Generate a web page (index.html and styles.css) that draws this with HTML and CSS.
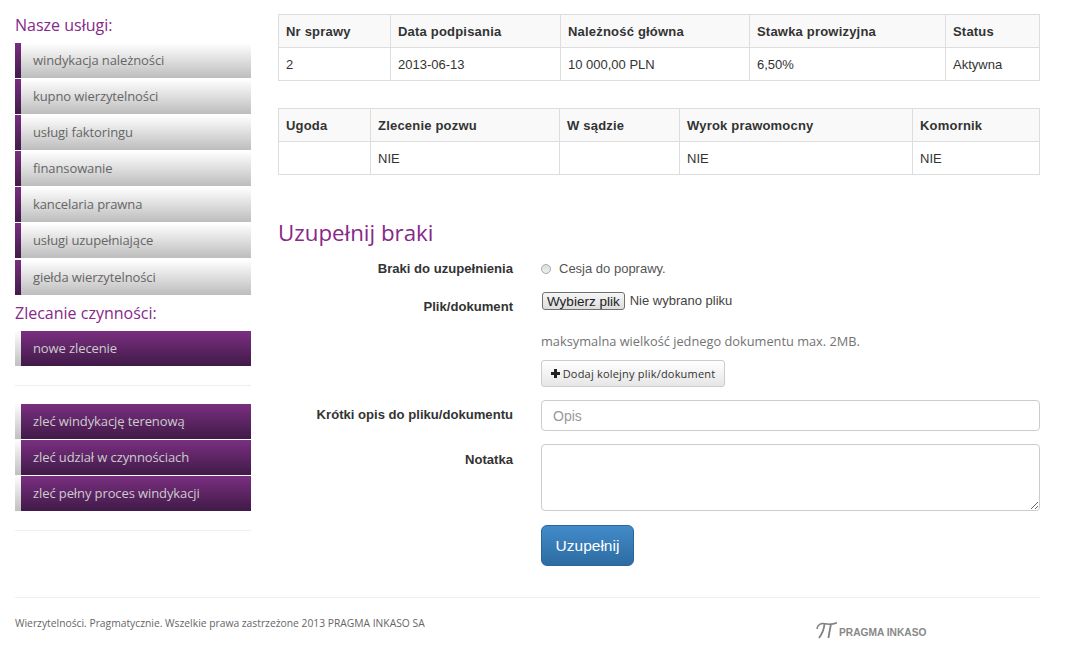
FILE: index.html
```html
<!DOCTYPE html>
<html lang="pl">
<head>
  <meta charset="UTF-8">
  <meta name="viewport" content="width=device-width, initial-scale=1">
  <title>Uzupełnij braki</title>
  <link rel="stylesheet" href="styles.css">
</head>
<body>

  <div class="page">
    <div class="columns">

      <div class="sidebar">
        <h4>Nasze usługi:</h4>
        <ul class="menu">
          <li><a href="#">windykacja należności</a></li>
          <li><a href="#">kupno wierzytelności</a></li>
          <li><a href="#">usługi faktoringu</a></li>
          <li><a href="#">finansowanie</a></li>
          <li><a href="#">kancelaria prawna</a></li>
          <li class="wide"><a href="#">usługi uzupełniające</a></li>
          <li><a href="#">giełda wierzytelności</a></li>
        </ul>

        <h4 class="second">Zlecanie czynności:</h4>
        <ul class="menu dark">
          <li><a href="#">nowe zlecenie</a></li>
        </ul>
        <hr class="side-line">
        <ul class="menu dark">
          <li><a href="#">zleć windykację terenową</a></li>
          <li><a href="#">zleć udział w czynnościach</a></li>
          <li><a href="#">zleć pełny proces windykacji</a></li>
        </ul>
        <hr class="side-line">
      </div>

      <div class="content">
        <table class="info first">
          <colgroup>
            <col class="w112"><col class="w170"><col class="w189"><col class="w196"><col>
          </colgroup>
          <thead>
            <tr>
              <th>Nr sprawy</th>
              <th>Data podpisania</th>
              <th>Należność główna</th>
              <th>Stawka prowizyjna</th>
              <th>Status</th>
            </tr>
          </thead>
          <tbody>
            <tr>
              <td>2</td>
              <td>2013-06-13</td>
              <td>10 000,00 PLN</td>
              <td>6,50%</td>
              <td>Aktywna</td>
            </tr>
          </tbody>
        </table>

        <table class="info">
          <colgroup>
            <col class="w92"><col class="w189"><col class="w120"><col class="w233"><col>
          </colgroup>
          <thead>
            <tr>
              <th>Ugoda</th>
              <th>Zlecenie pozwu</th>
              <th>W sądzie</th>
              <th>Wyrok prawomocny</th>
              <th>Komornik</th>
            </tr>
          </thead>
          <tbody>
            <tr>
              <td></td>
              <td>NIE</td>
              <td></td>
              <td>NIE</td>
              <td>NIE</td>
            </tr>
          </tbody>
        </table>

        <h3>Uzupełnij braki</h3>

        <form class="form">
          <div class="row row-radio">
            <label>Braki do uzupełnienia</label>
            <div class="field radio-field">
              <span class="radio"></span>
              <span>Cesja do poprawy.</span>
            </div>
          </div>

          <div class="row row-file">
            <label>Plik/dokument</label>
            <div class="field">
              <div class="file">
                <button type="button" class="file-btn">Wybierz plik</button>
                <span>Nie wybrano pliku</span>
              </div>
              <p class="help">maksymalna wielkość jednego dokumentu max. 2MB.</p>
              <button type="button" class="btn-add">
                <svg width="9" height="9" viewBox="0 0 9 9"><path d="M3 0h3v3h3v3H6v3H3V6H0V3h3z" fill="#222"/></svg>
                Dodaj kolejny plik/dokument
              </button>
            </div>
          </div>

          <div class="row row-opis">
            <label>Krótki opis do pliku/dokumentu</label>
            <div class="field">
              <input type="text" class="control" placeholder="Opis">
            </div>
          </div>

          <div class="row row-note">
            <label>Notatka</label>
            <div class="field">
              <textarea class="control area"></textarea>
            </div>
          </div>

          <div class="row">
            <label></label>
            <div class="field">
              <button type="button" class="btn-send">Uzupełnij</button>
            </div>
          </div>
        </form>
      </div>
    </div>

    <div class="footer">
      <p>Wierzytelności. Pragmatycznie. Wszelkie prawa zastrzeżone 2013 PRAGMA INKASO SA</p>
      <div class="logo">
        <svg width="22" height="17" viewBox="0 0 22 17">
          <path d="M1 7C1.500 2.500 5 1 9 1.800C12 2.400 17 2.400 21 .8" fill="none" stroke="#808080" stroke-width="1.500"/>
          <path d="M8.500 2C8 7 6 12 3 16M15 2C14 7 13 12 12.500 16" fill="none" stroke="#808080" stroke-width="1.800"/>
        </svg>
        <span>PRAGMA INKASO</span>
      </div>
    </div>
  </div>

</body>
</html>
```

FILE: styles.css
```css
* {
  box-sizing: border-box;
}
body {
  margin: 0;
  font-family: "Liberation Sans", Arial, sans-serif;
  font-size: 13px;
  line-height: 20px;
  color: #333;
  background-color: #fff;
}
.page {
  width: 1040px;
  padding: 14px 0 0 15px;
}
.columns {
  display: flex;
  gap: 27px;
}
.sidebar {
  width: 236px;
  flex-shrink: 0;
}
.sidebar h4 {
  margin: 0;
  height: 29px;
  font-family: "Open Sans", sans-serif;
  font-weight: 400;
  font-size: 16px;
  line-height: 22px;
  color: #87288a;
}
.sidebar h4.second {
  height: 35px;
  padding-top: 6px;
}
.menu {
  list-style: none;
  margin: 0;
  padding: 0;
}
.menu li {
  margin-bottom: 1px;
}
.menu li.wide {
  margin-bottom: 2px;
}
.menu a {
  display: block;
  height: 35px;
  padding-left: 12px;
  border-left: 6px solid #5c2260;
  font-family: "Open Sans", sans-serif;
  font-size: 13px;
  letter-spacing: -.1px;
  line-height: 35px;
  color: #666;
  text-decoration: none;
  background: linear-gradient(to bottom, #fff, #bdbdbd);
  border-image: linear-gradient(to bottom, #7a2f80, #401a48) 1;
}
.menu.dark a {
  color: #ccc;
  background: linear-gradient(to bottom, #7a2f80, #401a48);
  border-image: linear-gradient(to bottom, #fff, #bdbdbd) 1;
}
.side-line {
  margin: 19px 0 18px;
  border: 0;
  border-top: 1px solid #eee;
}
.content {
  width: 762px;
}
table.info {
  width: 100%;
  table-layout: fixed;
  border-collapse: collapse;
}
table.first {
  margin-bottom: 27px;
}
.w92 { width: 92px; }
.w112 { width: 112px; }
.w120 { width: 120px; }
.w170 { width: 170px; }
.w189 { width: 189px; }
.w196 { width: 196px; }
.w233 { width: 233px; }
th, td {
  height: 33px;
  padding: 7px 7px 5px;
  border: 1px solid #ddd;
  text-align: left;
}
th {
  letter-spacing: .2px;
  background-color: #f9f9f9;
}
h3 {
  margin: 43px 0 0;
  font-family: "Open Sans", sans-serif;
  font-weight: 400;
  font-size: 22.300px;
  line-height: 30px;
  color: #87288a;
}
.row {
  display: flex;
  gap: 28px;
}
.row label {
  width: 235px;
  flex-shrink: 0;
  text-align: right;
  font-size: 13.100px;
  font-weight: bold;
}
.field {
  width: 499px;
}
.row-radio {
  margin-top: 11px;
}
.radio-field {
  display: flex;
  align-items: center;
  gap: 8px;
  color: #555;
}
.radio {
  width: 10px;
  height: 10px;
  border: 1px solid #aaa;
  border-radius: 50%;
  background: linear-gradient(to bottom, #ddd, #eee);
}
.row-file {
  margin-top: 12px;
}
.row-file label {
  padding-top: 6px;
}
.file {
  display: flex;
  align-items: center;
  gap: 5px;
  padding-left: 1px;
  height: 20px;
  color: #444;
}
.file-btn {
  height: 18px;
  padding: 0 4px;
  font-family: "Liberation Sans", Arial, sans-serif;
  font-size: 13.500px;
  color: #222;
  background: linear-gradient(to bottom, #f6f6f6, #ddd);
  border: 1px solid #707070;
  border-radius: 3px;
}
.help {
  margin: 20px 0 9px;
  font-family: "Open Sans", sans-serif;
  font-size: 12.800px;
  color: #737373;
}
.btn-add {
  display: block;
  height: 27px;
  width: 184px;
  padding: 0;
  font-family: "Open Sans", sans-serif;
  font-size: 11px;
  letter-spacing: .2px;
  color: #333;
  background: linear-gradient(to bottom, #fff, #e6e6e6);
  border: 1px solid #ccc;
  border-radius: 3px;
}
.row-opis {
  margin-top: 13px;
}
.row-opis label {
  padding-top: 5px;
}
.control {
  display: block;
  width: 100%;
  height: 31px;
  padding: 6px 11px;
  font-family: "Liberation Sans", Arial, sans-serif;
  font-size: 14px;
  color: #555;
  border: 1px solid #ccc;
  border-radius: 4px;
}
.control::placeholder {
  color: #999;
}
.row-note {
  margin-top: 13px;
}
.row-note label {
  padding-top: 6px;
}
.area {
  height: 67px;
}
.btn-send {
  display: block;
  width: 93px;
  height: 41px;
  margin-top: 14px;
  padding: 0;
  font-family: "Liberation Sans", Arial, sans-serif;
  font-size: 15.500px;
  color: #fff;
  background: linear-gradient(to bottom, #428bca, #2d6ca2);
  border: 1px solid #2b669a;
  border-radius: 6px;
}
.footer {
  display: flex;
  margin-top: 31px;
  padding-top: 15px;
  height: 56px;
  border-top: 1px solid #eee;
}
.footer p {
  margin: 0;
  width: 801px;
  font-family: "Open Sans", sans-serif;
  font-size: 10.300px;
  color: #666;
}
.logo {
  display: flex;
  align-items: flex-end;
  gap: 1px;
  height: 26px;
  font-family: "Liberation Sans", Arial, sans-serif;
  font-size: 10.200px;
  font-weight: bold;
  line-height: 12px;
  color: #888;
}
```
